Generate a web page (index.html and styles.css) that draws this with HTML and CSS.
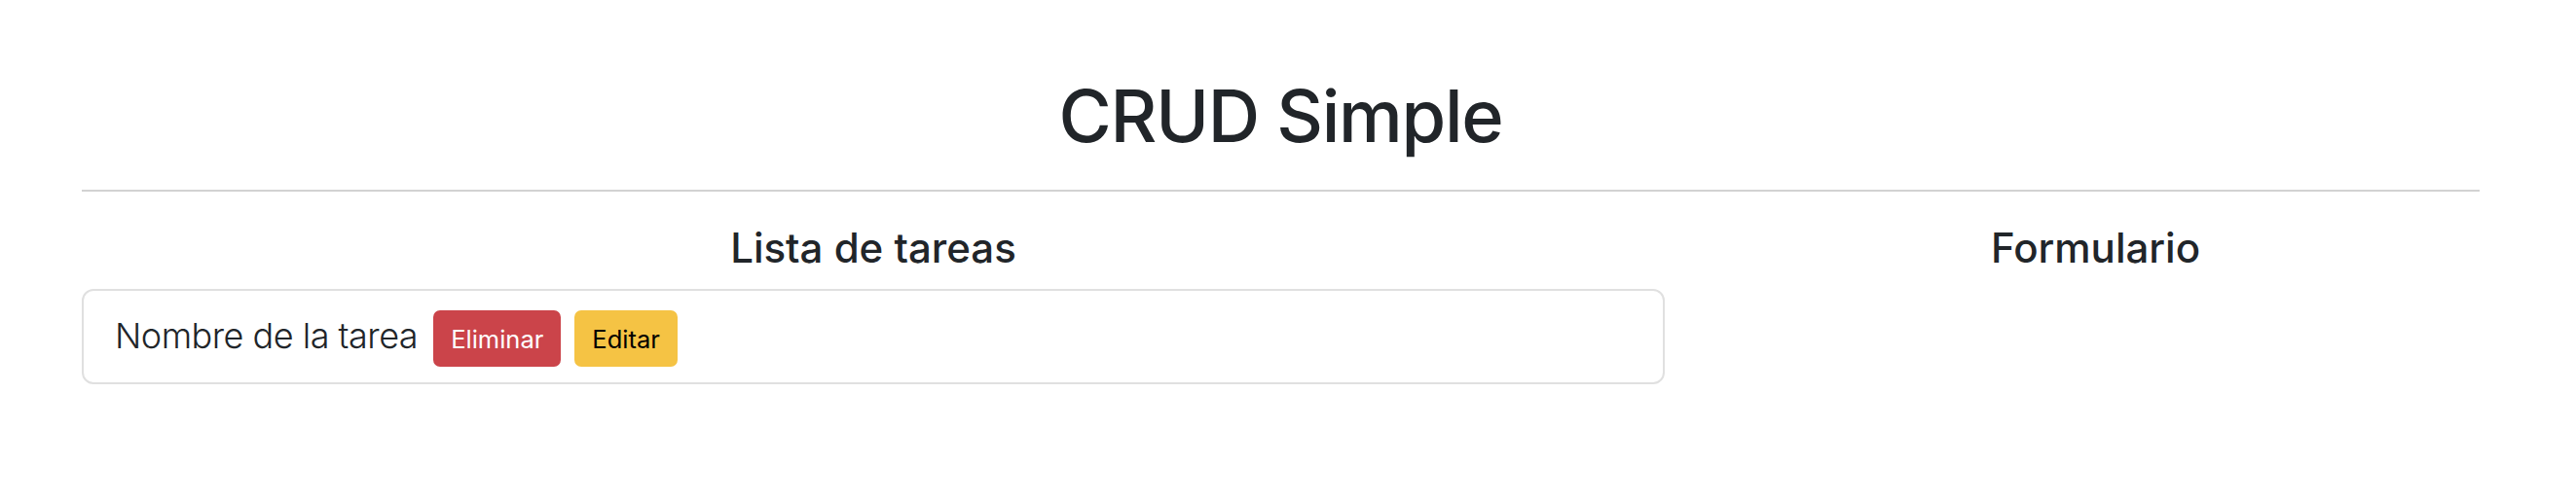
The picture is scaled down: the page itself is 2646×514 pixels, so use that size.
FILE: index.html
```html
<!DOCTYPE html>
<html lang="es">
<head>
<meta charset="utf-8">
<title>CRUD Simple</title>
<link rel="stylesheet" href="styles.css">
</head>
<body>
<div class="container">
  <h1 class="title">CRUD Simple</h1>
  <hr class="divider">
  <div class="row">
    <div class="col-main">
      <h4 class="section-title">Lista de tareas</h4>
      <ul class="list-group">
        <li class="list-item">
          <span class="task-name">Nombre de la tarea</span>
          <button class="btn btn-danger">Eliminar</button>
          <button class="btn btn-warning">Editar</button>
        </li>
      </ul>
    </div>
    <div class="col-side">
      <h4 class="section-title">Formulario</h4>
    </div>
  </div>
</div>
</body>
</html>
```
FILE: styles.css
```css
html, body {
  margin: 0;
  padding: 0;
  background: #ffffff;
}

body {
  font-family: Inter, "Noto Sans", "Liberation Sans", sans-serif;
  color: #212529;
}

.container {
  width: 2463px;
  margin-left: 84px;
}

.title {
  margin: 75px 0 0;
  font-size: 74px;
  font-weight: 500;
  letter-spacing: -1.3px;
  line-height: 1.2;
  text-align: center;
  color: #212529;
}

.divider {
  margin: 31px 0 0;
  border: 0;
  height: 2px;
  background: #d2d2d2;
}

.row {
  display: grid;
  grid-template-columns: 1626px 1fr;
  column-gap: 48px;
  margin-top: 33px;
}

.section-title {
  margin: 0;
  font-size: 42px;
  font-weight: 500;
  line-height: 1.2;
  text-align: center;
  color: #212529;
}

.list-group {
  list-style: none;
  margin: 17px 0 0;
  padding: 0;
}

.list-item {
  display: flex;
  align-items: baseline;
  padding: 20px 32px 16px;
  border: 2px solid #e0e0e0;
  border-radius: 12px;
}

.task-name {
  font-size: 36px;
  font-weight: 300;
  letter-spacing: -0.5px;
  line-height: 1.2;
  margin-right: 16px;
}

.btn {
  font-family: inherit;
  font-size: 25.5px;
  font-weight: 400;
  height: 58px;
  padding: 0 16px;
  border: 2px solid transparent;
  border-radius: 7px;
  cursor: pointer;
}

.btn + .btn {
  margin-left: 14px;
}

.btn-danger {
  background: #cb444a;
  border-color: #cb444a;
  color: #ffffff;
}

.btn-warning {
  background: #f5c344;
  border-color: #f5c344;
  color: #000000;
}
```
